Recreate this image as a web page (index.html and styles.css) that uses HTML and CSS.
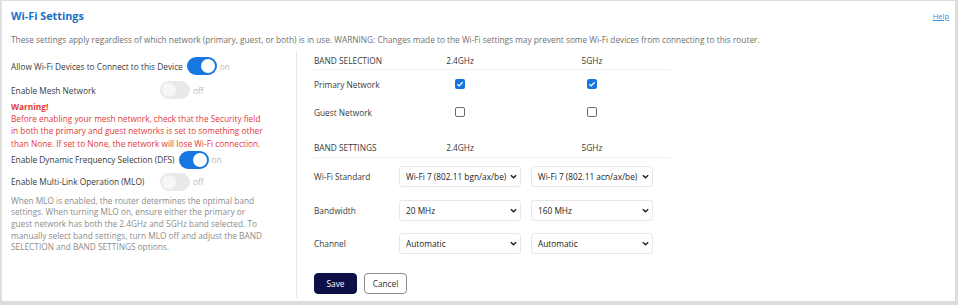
FILE: index.html
```html
<!DOCTYPE html>
<html lang="en">
<head>
    <meta charset="UTF-8">
    <meta name="viewport" content="width=device-width, initial-scale=1.0">
    <title>Wi-Fi Settings</title>
    <link rel="stylesheet" href="styles.css">
</head>
<body>
    <div class="card">
        <div class="header">
            <h2 class="title">Wi-Fi Settings</h2>
            <a href="#" class="help">Help</a>
        </div>
        <p class="intro">These settings apply regardless of which network (primary, guest, or both) is in use. WARNING: Changes made to the Wi-Fi settings may prevent some Wi-Fi devices from connecting to this router.</p>

        <div class="columns">
            <div class="left">
                <div class="toggle-row row-first">
                    <span class="toggle-label">Allow Wi-Fi Devices to Connect to this Device</span>
                    <span class="toggle on"><span class="knob"></span></span>
                    <span class="state">on</span>
                </div>
                <div class="toggle-row row-mesh">
                    <span class="toggle-label fixed">Enable Mesh Network</span>
                    <span class="toggle"><span class="knob"></span></span>
                    <span class="state">off</span>
                </div>
                <div class="warning">
                    <strong>Warning!</strong><br>
                    Before enabling your mesh network, check that the Security field in both the primary and guest networks is set to something other than None. If set to None, the network will lose Wi-Fi connection.
                </div>
                <div class="toggle-row">
                    <span class="toggle-label">Enable Dynamic Frequency Selection (DFS)</span>
                    <span class="toggle on"><span class="knob"></span></span>
                    <span class="state">on</span>
                </div>
                <div class="toggle-row row-mlo">
                    <span class="toggle-label fixed">Enable Multi-Link Operation (MLO)</span>
                    <span class="toggle"><span class="knob"></span></span>
                    <span class="state">off</span>
                </div>
                <p class="note">When MLO is enabled, the router determines the optimal band settings. When turning MLO on, ensure either the primary or guest network has both the 2.4GHz and 5GHz band selected. To manually select band settings, turn MLO off and adjust the BAND SELECTION and BAND SETTINGS options.</p>
            </div>

            <div class="right">
                <div class="grid head">
                    <span>BAND SELECTION</span>
                    <span class="center">2.4GHz</span>
                    <span class="center">5GHz</span>
                </div>
                <div class="grid check-row">
                    <span>Primary Network</span>
                    <span class="center"><span class="check checked"><svg viewBox="0 0 10 10" width="10" height="10"><path d="M2.4 5.2 L4.2 6.9 L7.6 3.3" fill="none" stroke="#fff" stroke-width="1.3"/></svg></span></span>
                    <span class="center"><span class="check checked"><svg viewBox="0 0 10 10" width="10" height="10"><path d="M2.4 5.2 L4.2 6.9 L7.6 3.3" fill="none" stroke="#fff" stroke-width="1.3"/></svg></span></span>
                </div>
                <div class="grid check-row">
                    <span>Guest Network</span>
                    <span class="center"><span class="check"></span></span>
                    <span class="center"><span class="check"></span></span>
                </div>

                <div class="grid head head-settings">
                    <span>BAND SETTINGS</span>
                    <span class="center">2.4GHz</span>
                    <span class="center">5GHz</span>
                </div>
                <div class="grid select-row row-std">
                    <span>Wi-Fi Standard</span>
                    <div class="select-box">
                        <select class="select"><option>Wi-Fi 7 (802.11 bgn/ax/be)</option></select>
                        <svg class="chevron" viewBox="0 0 10 10" width="9" height="9"><path d="M2 3.5 L5 6.5 L8 3.5" fill="none" stroke="#222" stroke-width="1.6"/></svg>
                    </div>
                    <div class="select-box">
                        <select class="select"><option>Wi-Fi 7 (802.11 acn/ax/be)</option></select>
                        <svg class="chevron" viewBox="0 0 10 10" width="9" height="9"><path d="M2 3.5 L5 6.5 L8 3.5" fill="none" stroke="#222" stroke-width="1.6"/></svg>
                    </div>
                </div>
                <div class="grid select-row">
                    <span>Bandwidth</span>
                    <div class="select-box">
                        <select class="select"><option>20 MHz</option></select>
                        <svg class="chevron" viewBox="0 0 10 10" width="9" height="9"><path d="M2 3.5 L5 6.5 L8 3.5" fill="none" stroke="#222" stroke-width="1.6"/></svg>
                    </div>
                    <div class="select-box">
                        <select class="select"><option>160 MHz</option></select>
                        <svg class="chevron" viewBox="0 0 10 10" width="9" height="9"><path d="M2 3.5 L5 6.5 L8 3.5" fill="none" stroke="#222" stroke-width="1.6"/></svg>
                    </div>
                </div>
                <div class="grid select-row">
                    <span>Channel</span>
                    <div class="select-box">
                        <select class="select"><option>Automatic</option></select>
                        <svg class="chevron" viewBox="0 0 10 10" width="9" height="9"><path d="M2 3.5 L5 6.5 L8 3.5" fill="none" stroke="#222" stroke-width="1.6"/></svg>
                    </div>
                    <div class="select-box">
                        <select class="select"><option>Automatic</option></select>
                        <svg class="chevron" viewBox="0 0 10 10" width="9" height="9"><path d="M2 3.5 L5 6.5 L8 3.5" fill="none" stroke="#222" stroke-width="1.6"/></svg>
                    </div>
                </div>

                <div class="buttons">
                    <button class="btn btn-save">Save</button>
                    <button class="btn btn-cancel">Cancel</button>
                </div>
            </div>
        </div>
    </div>
</body>
</html>
```

FILE: styles.css
```css
/* page frame */
html, body {
    height: 100%;
}

body {
    margin: 0;
    padding: 1px 3px 4px 1px;
    box-sizing: border-box;
    background-color: #dcdcdc;
    font-family: "Open Sans", "Noto Sans", sans-serif;
    font-size: 8.3px;
    color: #3a3a3a;
}

.card {
    height: 100%;
    box-sizing: border-box;
    background-color: #ffffff;
    border-left: 1px solid #e4e4e4;
    padding: 0 0 0 9px;
}

.header {
    display: flex;
    justify-content: space-between;
    align-items: center;
    height: 29px;
    padding-right: 6px;
}

.title {
    margin: 0;
    font-size: 10.8px;
    font-weight: 700;
    color: #1a6fc8;
}

.help {
    font-size: 7.5px;
    color: #3d8be0;
    text-decoration: underline;
}

.intro {
    margin: 4px 0 0;
    color: #707070;
    line-height: 12px;
}

/* two columns */
.columns {
    display: flex;
    margin-top: 5px;
}

.left {
    width: 286px;
    box-sizing: border-box;
    padding-top: 5px;
    border-right: 1px solid #e8e8e8;
    height: 247px;
}

.toggle-row {
    display: flex;
    align-items: center;
    height: 20px;
}

.row-mesh {
    margin-top: 4px;
}

.row-mlo {
    margin-top: 2px;
}

.toggle-label {
    margin-right: 4px;
}

.toggle-label.fixed {
    width: 145px;
}

.toggle {
    display: flex;
    align-items: center;
    width: 30px;
    height: 18px;
    box-sizing: border-box;
    padding: 2px;
    border-radius: 9px;
    background-color: #e9e9e9;
}

.toggle .knob {
    width: 14px;
    height: 14px;
    border-radius: 50%;
    background-color: #f6f6f6;
}

.toggle.on {
    background-color: #1677e0;
    justify-content: flex-end;
}

.toggle.on .knob {
    background-color: #ffffff;
}

.state {
    margin-left: 3px;
    color: #b8b8b8;
}

.warning {
    width: 256px;
    margin-top: 1px;
    color: #e23a3a;
    line-height: 12.2px;
}

.note {
    width: 256px;
    margin: 3px 0 0;
    color: #8c8c8c;
    line-height: 11.6px;
}

/* band table */
.right {
    padding-left: 17px;
}

.grid {
    display: grid;
    grid-template-columns: 75px 122px 122px;
    column-gap: 10px;
    align-items: center;
    width: 356px;
}

.center {
    display: flex;
    justify-content: center;
}

.head {
    height: 18px;
    border-bottom: 1px solid #f0f0f0;
    color: #3a3a3a;
}

.check-row {
    height: 28px;
}

.head-settings {
    margin-top: 11px;
    height: 20px;
}

.check {
    display: inline-flex;
    width: 10px;
    height: 10px;
    box-sizing: border-box;
    border: 1px solid #6b6b6b;
    border-radius: 2px;
}

.check.checked {
    border: none;
    background-color: #1677e0;
}

.select-row {
    height: 33px;
}

.row-std {
    height: 36px;
}

.select-box {
    position: relative;
    height: 21px;
}

.select {
    appearance: none;
    -webkit-appearance: none;
    width: 100%;
    height: 100%;
    padding: 0 13px 0 6px;
    border: 1px solid #e8e8e8;
    border-radius: 3px;
    background-color: #ffffff;
    font-family: inherit;
    font-size: 8.3px;
    color: #222222;
}

.chevron {
    position: absolute;
    right: 3px;
    top: 6px;
    pointer-events: none;
}

.buttons {
    display: flex;
    gap: 7px;
    margin-top: 13px;
}

.btn {
    width: 43px;
    height: 21px;
    border-radius: 4px;
    font-family: inherit;
    font-size: 8.3px;
    cursor: pointer;
}

.btn-save {
    background-color: #0c0f45;
    border: 1px solid #0c0f45;
    color: #ffffff;
}

.btn-cancel {
    background-color: #ffffff;
    border: 1px solid #8a8a8a;
    color: #333333;
}
```
